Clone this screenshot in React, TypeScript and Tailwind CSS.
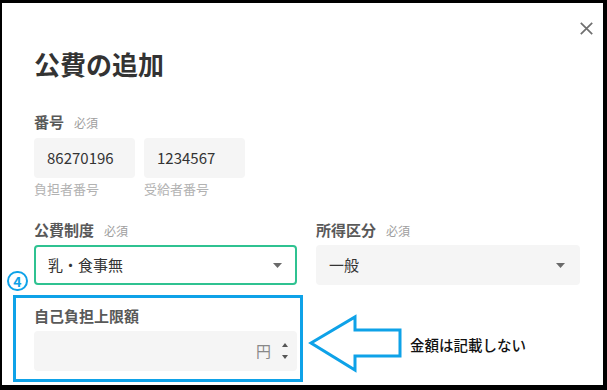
const jp = { fontFamily: '"Noto Sans CJK JP", "Noto Sans", sans-serif' };

const Caret = () => (
  <svg width="9" height="5" viewBox="0 0 9 5" className="shrink-0">
    <path d="M0 0h9L4.5 5z" fill="#6a6a6a" />
  </svg>
);

const Required = () => <span className="ml-[10px] text-[12px] font-normal text-[#9e9e9e]">必須</span>;

const Label = ({ text, req }: { text: string; req?: boolean }) => (
  <div className="flex items-baseline h-[20px] leading-[20px] text-[15px] font-bold text-[#595959]">
    <span>{text}</span>
    {req && <Required />}
  </div>
);

const NumberBox = ({ value, caption }: { value: string; caption: string }) => (
  <div className="flex flex-col w-[101px]">
    <div className="h-[40px] rounded-[4px] bg-[#f5f5f5] flex items-center pl-[13px] text-[15px] text-[#333]">
      {value}
    </div>
    <div className="mt-[2px] h-[18px] leading-[18px] text-[13px] text-[#b2b2b2]">{caption}</div>
  </div>
);

export default function App() {
  return (
    <div className="w-[607px] h-[390px] bg-black pt-[3px] pl-[2px] pr-[4px] pb-[5px]" style={jp}>
      <div className="relative w-full h-full bg-white overflow-hidden">
        <div className="flex flex-col pl-[32px] pt-[46px]">
          <h1 className="h-[30px] leading-[30px] text-[26px] font-bold text-[#333]">公費の追加</h1>

          <div className="mt-[33px]">
            <Label text="番号" req />
          </div>
          <div className="mt-[6px] flex gap-[9px]">
            <NumberBox value="86270196" caption="負担者番号" />
            <NumberBox value="1234567" caption="受給者番号" />
          </div>

          <div className="mt-[22px] flex gap-[19px]">
            <div className="flex flex-col w-[263px]">
              <Label text="公費制度" req />
              <div className="mt-[5px] h-[40px] rounded-[4px] border-2 border-[#2fc291] bg-white flex items-center justify-between pl-[12px] pr-[13px] text-[15px] text-[#333]">
                <span>乳・食事無</span>
                <Caret />
              </div>
            </div>
            <div className="flex flex-col w-[264px]">
              <Label text="所得区分" req />
              <div className="mt-[5px] h-[40px] rounded-[4px] bg-[#f5f5f5] flex items-center justify-between pl-[13px] pr-[15px] text-[15px] text-[#333]">
                <span>一般</span>
                <Caret />
              </div>
            </div>
          </div>

          <div className="mt-[21px] w-[263px]">
            <Label text="自己負担上限額" />
            <div className="mt-[5px] h-[40px] rounded-[4px] bg-[#f5f5f5] flex items-center justify-end pr-[9px]">
              <span className="text-[15px] text-[#888]">円</span>
              <div className="ml-[11px] flex flex-col justify-between h-[20px] py-[2px]">
                <svg width="6" height="4" viewBox="0 0 6 4">
                  <path d="M0 4h6L3 0z" fill="#555" />
                </svg>
                <svg width="6" height="4" viewBox="0 0 6 4">
                  <path d="M0 0h6L3 4z" fill="#555" />
                </svg>
              </div>
            </div>
          </div>
        </div>

        {/* close button */}
        <svg className="absolute left-[578px] top-[19px]" width="13" height="13" viewBox="0 0 13 13">
          <path d="M0.8 0.8L12.2 12.2M12.2 0.8L0.8 12.2" stroke="#6f6f6f" strokeWidth="1.7" />
        </svg>

        {/* annotation */}
        <div className="absolute left-[5px] top-[268px] w-[21px] h-[20px] rounded-full border-2 border-[#0ea2e8] flex items-center justify-center text-[14px] font-bold leading-none text-[#0ea2e8]">
          4
        </div>
        <div className="absolute left-[11px] top-[292px] w-[290px] h-[87px] border-[3px] border-[#0ea2e8]" />
        <svg className="absolute left-[306px] top-[311px]" width="96" height="64" viewBox="0 0 96 64">
          <path
            d="M3 29L47 3V16H92V42H47V56Z"
            fill="none"
            stroke="#0ea2e8"
            strokeWidth="3"
            strokeLinejoin="miter"
          />
        </svg>
        <div className="absolute left-[408px] top-[332px] h-[20px] leading-[20px] text-[14.5px] font-medium text-[#111]">
          金額は記載しない
        </div>
      </div>
    </div>
  );
}
